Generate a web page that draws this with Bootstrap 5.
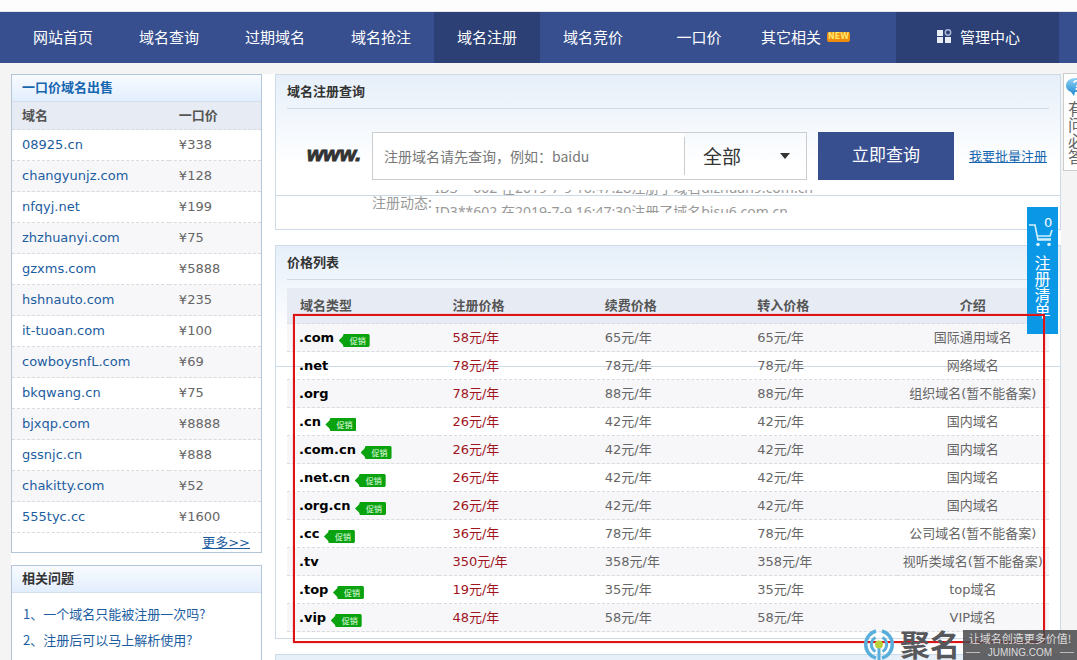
<!DOCTYPE html>
<html lang="zh-CN">
<head>
<meta charset="utf-8">
<meta name="viewport" content="width=device-width, initial-scale=1">
<title>域名注册</title>
<link href="https://cdn.jsdelivr.net/npm/bootstrap@5.3.0/dist/css/bootstrap.min.css" rel="stylesheet">
<style>
:root { --brand:#374f8f; --brand-dark:#2c4075; --edge:#cddae8; --link:#1c5d9f; }
body { font:13px/20px "DejaVu Sans","Noto Sans CJK SC",sans-serif; color:#666; background:#f4f4f4; }
a { color:var(--link); text-decoration:none; }
.page { height:100vh; }
.cjk { font-family:"Noto Sans CJK SC",sans-serif; }
.topline { height:12px; background:#fdfdfd; border-bottom:1px solid #e3e6ec; }
.mainnav { background:var(--brand); font-size:15px; padding-left:10px; padding-right:18px; }
.mainnav .nav-link { width:106px; height:51px; padding:0 0 2px; color:#fff; display:flex; align-items:center; justify-content:center; white-space:nowrap; }
.mainnav .nav-link.active { background:var(--brand-dark); }
.mainnav .nav-link.other { width:104px; justify-content:flex-start; gap:6px; padding-left:9px; }
.mainnav .nav-link.center { width:163px; background:var(--brand-dark); gap:8px; padding-left:2px; }
.tag-new { font:bold 8px/10px "DejaVu Sans",sans-serif; width:23px; color:#ffe46b; background:#ee8d0c; border-radius:2px; text-align:center; }
.shell { margin:11px 16px 0 11px; background:#fff; gap:13px; }
.side { flex:0 0 251px; gap:12px; }
.side-box { background:#fff; border:1px solid #b4c5d8; }
.side-title { height:27px; padding:0 10px; font-size:13px; line-height:26px; margin:0; font-weight:700; color:#333; background:linear-gradient(#f8fbff,#e2eefd); border-bottom:1px solid #d5deea; }
.side-title.blue { color:#1766b0; }
.plain { width:100%; border-collapse:separate; border-spacing:0; table-layout:fixed; }
.plain th, .plain td { padding:0; border-bottom:1px dashed #d9dadd; white-space:nowrap; }
.plain thead th { background:#e7ebf4; color:#555; font-weight:700; }
.sale th, .sale td { height:31px; padding-left:10px; }
.sale thead th { height:28px; }
.sale tbody tr:nth-child(even), .price tbody tr:nth-child(odd) { background:#f7f7fa; }
.more { padding-right:11px; height:19px; }
.panel { border:1px solid var(--edge); padding:0 11px; background:linear-gradient(#e6eff9,#fff 90px) top/100% 120px no-repeat, linear-gradient(var(--edge),var(--edge)) 0 120px/100% 1px no-repeat, #fff; }
.panel h2 { font-size:13px; line-height:33px; height:34px; margin:0; font-weight:700; color:#333; border-bottom:1px solid #cfdae6; }
.stack { gap:15px; }
.find { margin-top:23px; padding-left:20px; }
.www { width:65px; font:italic bold 21px/44px "Liberation Sans",sans-serif; color:#333; -webkit-text-stroke:1px #333; padding-bottom:4px; }
.searchbox { border:1px solid #ccc; height:48px; }
.searchbox input { border:0; background:#fff; font-size:14px; color:#666; padding:0 11px 1px; outline:0; }
.searchbox input::placeholder { color:#777; opacity:1; }
.searchbox select { width:122px; height:38px; border:0; border-left:1px solid #ccc; border-radius:0; padding:0 18px; font-size:19px; line-height:38px; color:#333; background:url("data:image/svg+xml,%3Csvg xmlns='http://www.w3.org/2000/svg' width='10' height='6'%3E%3Cpath d='M0 0h10L5 6z' fill='%23333'/%3E%3C/svg%3E") right 16px center no-repeat; appearance:none; outline:0; }
.go { width:136px; height:48px; margin-left:11px; border:0; border-radius:0; background:var(--brand); color:#fff; font-size:17px; padding:0 0 4px; }
.batch { margin:0 2px 0 15px; text-decoration:underline; color:#1766b0; }
.news { padding:8px 0 15px 85px; font-size:14px; color:#999; gap:3px; }
.news .label { padding-top:4px; height:26px; }
.ticker { font-family:"Noto Sans","Noto Sans CJK SC",sans-serif; height:23px; overflow:hidden; display:flex; flex-direction:column; justify-content:center; line-height:24px; margin:2px 0 0; padding-bottom:4px; }
.price { margin:8px 0 6px; }
.price th, .price td { height:28px; padding:1px 0 0 13px; }
.price thead th { height:36px; }
.price th:last-child, .price td:last-child { padding:1px 0 0; text-align:center; overflow:visible; }
.price tbody th:first-child { color:#000; font-weight:700; text-align:left; padding:1px 0 0 12px; }
.price td:nth-child(2) { color:#a0141e; }
.promo { display:inline-block; vertical-align:-2px; width:31px; height:13px; padding-left:7px; background:#0aa30f; color:#e9ffe9; font:8px/13px "Noto Sans CJK SC",sans-serif; clip-path:polygon(0 50%,13% 20%,16% 0,97% 0,100% 10%,100% 90%,97% 100%,16% 100%,13% 80%); text-align:center; }
.faq { margin:0; padding:8px 0 0 11px; list-style:none; line-height:26px; }
.help { top:73px; right:-14px; width:28px; height:98px; border:1px solid #ccc; background:#fff; font-size:16px; line-height:16px; color:#666; padding:4px 4px 0; }
.help svg { margin:0 0 4px -2px; }
.cart { top:207px; right:19px; width:31px; height:127px; background:#0a97e6; color:#fff; font-size:16px; line-height:16px; text-align:center; padding:8px 7px; }
.cart svg { margin:-8px 0 6px -5px; display:block; }
.cart b { font:13px/16px "DejaVu Sans",sans-serif; display:block; padding-left:10px; }
.frame { left:17px; right:15px; top:68px; bottom:-5px; border:2px solid #dc1414; box-shadow:0 0 1px #f66; pointer-events:none; }
.mark-area { right:0; bottom:0; height:31px; }
.brandname { font-size:30px; line-height:30px; color:#57585c; font-weight:700; padding:0 3px 4px 5px; }
.slogan { width:114px; height:30px; background:rgba(75,75,78,.86); color:#ddd; font:11px/17px "Noto Sans CJK SC",sans-serif; text-align:center; white-space:nowrap; }
.slogan small { font:10px/12px "Liberation Sans",sans-serif; gap:8px; }
.slogan i { height:1px; width:14px; background:#bbb; }
</style>
<script src="https://cdn.jsdelivr.net/npm/bootstrap@5.3.0/dist/js/bootstrap.bundle.min.js"></script>
</head>
<body>
<div class="page d-flex flex-column position-relative overflow-hidden">
<div class="topline flex-shrink-0"></div>
<nav class="mainnav cjk d-flex flex-shrink-0">
  <a class="nav-link" href="#">网站首页</a><a class="nav-link" href="#">域名查询</a><a class="nav-link" href="#">过期域名</a><a class="nav-link" href="#">域名抢注</a><a class="nav-link active" href="#">域名注册</a><a class="nav-link" href="#">域名竞价</a><a class="nav-link" href="#">一口价</a>
  <a class="nav-link other" href="#">其它相关<span class="tag-new">NEW</span></a>
  <a class="nav-link center ms-auto" href="#"><svg width="15" height="15" viewBox="0 0 15 15" fill="#e8edf8"><path d="M0 1h6v6H0zM0 8h6v6H0zM8 8h6v6H8z"/><circle cx="11" cy="3.500" r="2.700" fill="none" stroke="#a9b5d3" stroke-width="1.500"/></svg>管理中心</a>
</nav>
<div class="shell d-flex flex-grow-1">
  <aside class="side d-flex flex-column">
    <section class="side-box">
      <h2 class="side-title blue">一口价域名出售</h2>
      <table class="plain sale">
        <colgroup><col style="width:63%"><col></colgroup>
        <thead><tr><th>域名</th><th>一口价</th></tr></thead>
        <tbody>
          <tr><td><a href="#">08925.cn</a></td><td>¥338</td></tr>
          <tr><td><a href="#">changyunjz.com</a></td><td>¥128</td></tr>
          <tr><td><a href="#">nfqyj.net</a></td><td>¥199</td></tr>
          <tr><td><a href="#">zhzhuanyi.com</a></td><td>¥75</td></tr>
          <tr><td><a href="#">gzxms.com</a></td><td>¥5888</td></tr>
          <tr><td><a href="#">hshnauto.com</a></td><td>¥235</td></tr>
          <tr><td><a href="#">it-tuoan.com</a></td><td>¥100</td></tr>
          <tr><td><a href="#">cowboysnfL.com</a></td><td>¥69</td></tr>
          <tr><td><a href="#">bkqwang.cn</a></td><td>¥75</td></tr>
          <tr><td><a href="#">bjxqp.com</a></td><td>¥8888</td></tr>
          <tr><td><a href="#">gssnjc.cn</a></td><td>¥888</td></tr>
          <tr><td><a href="#">chakitty.com</a></td><td>¥52</td></tr>
          <tr><td><a href="#">555tyc.cc</a></td><td>¥1600</td></tr>
        </tbody>
      </table>
      <div class="more text-end"><a class="text-decoration-underline" href="#">更多&gt;&gt;</a></div>
    </section>
    <section class="side-box border-bottom-0 flex-grow-1">
      <h2 class="side-title">相关问题</h2>
      <ul class="faq cjk">
        <li><a href="#">1、一个域名只能被注册一次吗?</a></li>
        <li><a href="#">2、注册后可以马上解析使用?</a></li>
      </ul>
    </section>
  </aside>
  <main class="stack d-flex flex-column flex-grow-1">
    <section class="panel">
      <h2>域名注册查询</h2>
      <form class="find cjk d-flex align-items-center">
        <span class="www flex-shrink-0">www.</span>
        <div class="searchbox d-flex align-items-center flex-grow-1">
          <input class="flex-grow-1 h-100" type="text" aria-label="域名" placeholder="注册域名请先查询，例如：baidu">
          <select aria-label="后缀"><option>全部</option></select>
        </div>
        <button class="go" type="button">立即查询</button>
        <a class="batch text-nowrap" href="#">我要批量注册</a>
      </form>
      <div class="news cjk d-flex">
        <span class="label">注册动态:</span>
        <p class="ticker"><span>ID3**602 在2019-7-9 16:47:28注册了域名dizhuan9.com.cn</span><span>ID3**602 在2019-7-9 16:47:30注册了域名bisu6.com.cn</span></p>
      </div>
    </section>
    <section class="panel position-relative">
      <h2>价格列表</h2>
      <table class="plain price">
        <thead><tr><th>域名类型</th><th>注册价格</th><th>续费价格</th><th>转入价格</th><th>介绍</th></tr></thead>
        <tbody>
          <tr><th>.com <span class="promo">促销</span></th><td>58元/年</td><td>65元/年</td><td>65元/年</td><td>国际通用域名</td></tr>
          <tr><th>.net</th><td>78元/年</td><td>78元/年</td><td>78元/年</td><td>网络域名</td></tr>
          <tr><th>.org</th><td>78元/年</td><td>88元/年</td><td>88元/年</td><td>组织域名(暂不能备案)</td></tr>
          <tr><th>.cn <span class="promo">促销</span></th><td>26元/年</td><td>42元/年</td><td>42元/年</td><td>国内域名</td></tr>
          <tr><th>.com.cn <span class="promo">促销</span></th><td>26元/年</td><td>42元/年</td><td>42元/年</td><td>国内域名</td></tr>
          <tr><th>.net.cn <span class="promo">促销</span></th><td>26元/年</td><td>42元/年</td><td>42元/年</td><td>国内域名</td></tr>
          <tr><th>.org.cn <span class="promo">促销</span></th><td>26元/年</td><td>42元/年</td><td>42元/年</td><td>国内域名</td></tr>
          <tr><th>.cc <span class="promo">促销</span></th><td>36元/年</td><td>78元/年</td><td>78元/年</td><td>公司域名(暂不能备案)</td></tr>
          <tr><th>.tv</th><td>350元/年</td><td>358元/年</td><td>358元/年</td><td>视听类域名(暂不能备案)</td></tr>
          <tr><th>.top <span class="promo">促销</span></th><td>19元/年</td><td>35元/年</td><td>35元/年</td><td>top域名</td></tr>
          <tr><th>.vip <span class="promo">促销</span></th><td>48元/年</td><td>58元/年</td><td>58元/年</td><td>VIP域名</td></tr>
        </tbody>
      </table>
      <div class="frame position-absolute z-3"></div>
    </section>
    <section class="panel border-bottom-0 flex-grow-1"></section>
  </main>
</div>
<aside class="help cjk position-absolute">
  <svg class="d-block" width="22" height="18" viewBox="0 0 22 18"><defs><linearGradient id="bub" x2="0" y2="1"><stop stop-color="#8fd3f7"/><stop offset="1" stop-color="#1c86cf"/></linearGradient></defs><path d="M10 0C4 0 0 3 0 7.500c0 3 2 5.500 5 6.500l3 4 1-4c7 0 12-2 12-7S16 0 10 0z" fill="url(#bub)"/><path d="M8 5c0-3 5-3 5 0 0 2-2.500 2-2.500 4" fill="none" stroke="#fff" stroke-width="1.500"/><circle cx="10.500" cy="11" r="1" fill="#fff"/></svg>
  有问必答
</aside>
<aside class="cart cjk position-absolute">
  <b>0</b>
  <svg width="26" height="25" viewBox="0 0 26 25" fill="none" stroke="#d4f1ff" stroke-width="1.600"><path d="M0 2h6l3 15h13M8 13h13l2-6"/><path d="M9 16h13"/><circle cx="9" cy="21.500" r="1.800" fill="#d4f1ff" stroke="none"/><circle cx="20" cy="21.500" r="1.800" fill="#d4f1ff" stroke="none"/></svg>
  注册清单
</aside>
<footer class="mark-area cjk position-absolute d-flex align-items-center z-3">
  <svg width="32" height="31" viewBox="0 0 32 31" fill="none" stroke="#5aaedb"><path d="M13 2A14 14 0 0 0 13 29M19 2a14 14 0 0 1 0 27" stroke-width="3.500"/><path d="M12.500 8.500a8 8 0 0 0 0 14M19.500 8.500a8 8 0 0 1 0 14" stroke-width="3"/><path d="M16 18v13" stroke-width="3"/><circle cx="16" cy="15.500" r="4" fill="#b9d23c" stroke="none"/></svg>
  <span class="brandname">聚名</span>
  <div class="slogan">让域名创造更多价值!<small class="d-flex align-items-center justify-content-center"><i></i>JUMING.COM<i></i></small></div>
</footer>
</div>
</body>
</html>
